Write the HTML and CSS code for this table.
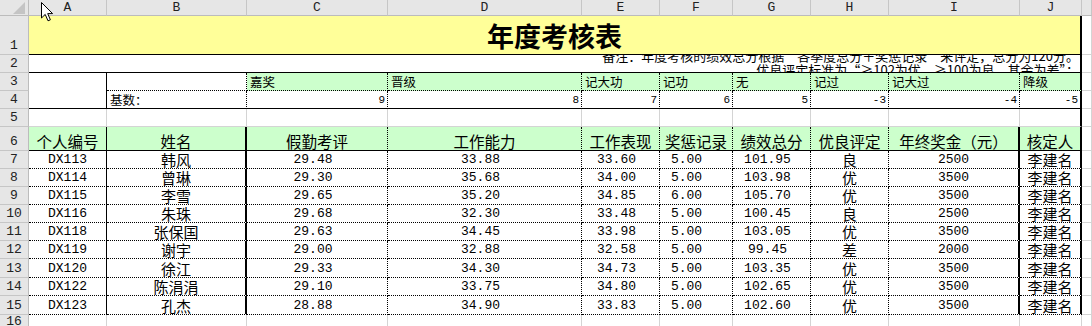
FILE: index.html
```html
<!DOCTYPE html>
<html lang="zh-CN">
<head>
<meta charset="utf-8">
<title>年度考核表</title>
<link rel="stylesheet" href="styles.css">
</head>
<body>
<div class="sheet">
  <!-- column headers -->
  <div class="corner"><span class="tri"></span></div>
  <div class="ch">A</div><div class="ch">B</div><div class="ch">C</div><div class="ch">D</div><div class="ch">E</div>
  <div class="ch">F</div><div class="ch">G</div><div class="ch">H</div><div class="ch">I</div><div class="ch">J</div><div class="ch"></div>

  <!-- row 1 -->
  <div class="rh">1</div>
  <div class="title">年度考核表</div>
  <div class="k"></div>

  <!-- row 2 -->
  <div class="rh">2</div>
  <div class="note"><div class="note-text">备注：年度考核的绩效总分根据“各季度总分＋奖惩记录”来评定，总分为120分。<br>优良评定标准为“≥102为优，≥100为良，其余为差”：</div></div>
  <div class="k"></div>

  <!-- row 3 -->
  <div class="rh">3</div>
  <div class="a34"></div>
  <div class="b3"></div>
  <div class="lv">嘉奖</div><div class="lv">晋级</div><div class="lv">记大功</div><div class="lv">记功</div>
  <div class="lv">无</div><div class="lv">记过</div><div class="lv">记大过</div><div class="lv last">降级</div>
  <div class="k"></div>

  <!-- row 4 -->
  <div class="rh">4</div>
  <div class="b4">基数：</div>
  <div class="bv">9</div><div class="bv">8</div><div class="bv">7</div><div class="bv">6</div>
  <div class="bv">5</div><div class="bv">-3</div><div class="bv">-4</div><div class="bv last">-5</div>
  <div class="k"></div>

  <!-- row 5 -->
  <div class="rh">5</div>
  <div></div><div></div><div></div><div></div><div></div><div></div><div></div><div></div><div></div><div class="j5"></div>
  <div class="k"></div>

  <!-- row 6 -->
  <div class="rh">6</div>
  <div class="hd ca">个人编号</div><div class="hd cb">姓名</div><div class="hd">假勤考评</div><div class="hd">工作能力</div>
  <div class="hd">工作表现</div><div class="hd">奖惩记录</div><div class="hd">绩效总分</div><div class="hd">优良评定</div>
  <div class="hd ci">年终奖金（元）</div><div class="hd cj">核定人</div>
  <div class="k"></div>

  <div class="rh">7</div>
  <div class="d ca n">DX113</div><div class="d cb">韩风</div><div class="d n sp">29.48</div><div class="d n sp">33.88</div><div class="d n sp">33.60</div><div class="d n sf">5.00</div><div class="d n sp">101.95</div><div class="d">良</div><div class="d n ci">2500</div><div class="d cj">李建名</div>
  <div class="k"></div>

  <div class="rh">8</div>
  <div class="d ca n">DX114</div><div class="d cb">曾琳</div><div class="d n sp">29.30</div><div class="d n sp">35.68</div><div class="d n sp">34.00</div><div class="d n sf">5.00</div><div class="d n sp">103.98</div><div class="d">优</div><div class="d n ci">3500</div><div class="d cj">李建名</div>
  <div class="k"></div>

  <div class="rh">9</div>
  <div class="d ca n">DX115</div><div class="d cb">李雪</div><div class="d n sp">29.65</div><div class="d n sp">35.20</div><div class="d n sp">34.85</div><div class="d n sf">6.00</div><div class="d n sp">105.70</div><div class="d">优</div><div class="d n ci">3500</div><div class="d cj">李建名</div>
  <div class="k"></div>

  <div class="rh">10</div>
  <div class="d ca n">DX116</div><div class="d cb">朱珠</div><div class="d n sp">29.68</div><div class="d n sp">32.30</div><div class="d n sp">33.48</div><div class="d n sf">5.00</div><div class="d n sp">100.45</div><div class="d">良</div><div class="d n ci">2500</div><div class="d cj">李建名</div>
  <div class="k"></div>

  <div class="rh">11</div>
  <div class="d ca n">DX118</div><div class="d cb">张保国</div><div class="d n sp">29.63</div><div class="d n sp">34.45</div><div class="d n sp">33.98</div><div class="d n sf">5.00</div><div class="d n sp">103.05</div><div class="d">优</div><div class="d n ci">3500</div><div class="d cj">李建名</div>
  <div class="k"></div>

  <div class="rh">12</div>
  <div class="d ca n">DX119</div><div class="d cb">谢宇</div><div class="d n sp">29.00</div><div class="d n sp">32.88</div><div class="d n sp">32.58</div><div class="d n sf">5.00</div><div class="d n sp">99.45</div><div class="d">差</div><div class="d n ci">2000</div><div class="d cj">李建名</div>
  <div class="k"></div>

  <div class="rh">13</div>
  <div class="d ca n">DX120</div><div class="d cb">徐江</div><div class="d n sp">29.33</div><div class="d n sp">34.30</div><div class="d n sp">34.73</div><div class="d n sf">5.00</div><div class="d n sp">103.35</div><div class="d">优</div><div class="d n ci">3500</div><div class="d cj">李建名</div>
  <div class="k"></div>

  <div class="rh">14</div>
  <div class="d ca n">DX122</div><div class="d cb">陈涓涓</div><div class="d n sp">29.10</div><div class="d n sp">33.75</div><div class="d n sp">34.80</div><div class="d n sf">5.00</div><div class="d n sp">102.65</div><div class="d">优</div><div class="d n ci">3500</div><div class="d cj">李建名</div>
  <div class="k"></div>

  <div class="rh">15</div>
  <div class="d ca n">DX123</div><div class="d cb">孔杰</div><div class="d n sp">28.88</div><div class="d n sp">34.90</div><div class="d n sp">33.83</div><div class="d n sf">5.00</div><div class="d n sp">102.60</div><div class="d">优</div><div class="d n ci">3500</div><div class="d cj">李建名</div>
  <div class="k"></div>

  <!-- row 16 -->
  <div class="rh">16</div>
  <div></div><div></div><div></div><div></div><div></div><div></div><div></div><div></div><div></div><div></div>
  <div class="k"></div>

  <svg class="cursor" width="14" height="22" viewBox="0 0 14 22" aria-hidden="true">
    <path d="M1.5 1.5 L1.5 17 L5.2 13.4 L8 19.8 L10.4 18.8 L7.7 12.6 L12.6 12.6 Z" fill="#fff" stroke="#000" stroke-width="1" stroke-linejoin="miter"/>
  </svg>
</div>
</body>
</html>
```

FILE: styles.css
```css
html, body {
  margin: 0;
  padding: 0;
  background: #fff;
}

.sheet {
  position: relative;
  display: grid;
  grid-template-columns: 29px 78px 140px 141px 194px 78px 73px 78px 78px 131px 62px 1fr;
  grid-template-rows: 16px 39px 18px 18px 18px 18px 24px 18px 18px 18px 18px 18px 18px 19px 18px 19px 1fr;
  width: 1092px;
  height: 326px;
  overflow: hidden;
  font-family: "Noto Sans CJK SC", sans-serif;
  color: #000;
}

.sheet > div {
  box-sizing: border-box;
  min-width: 0;
  display: flex;
  align-items: flex-end;
  overflow: hidden;
  white-space: nowrap;
  border-right: 1px solid #d4d4d4;
  border-bottom: 1px solid #d4d4d4;
}

/* headers */
.corner {
  background: #e6e6e6;
  position: relative;
  border-right-color: #bcbcbc !important;
  border-bottom-color: #bcbcbc !important;
}
.tri {
  position: absolute;
  left: 13px;
  top: 2px;
  width: 12px;
  height: 12px;
  background: #c4c4c4;
  clip-path: polygon(100% 0, 100% 100%, 0 100%);
}
.ch {
  background: #e6e6e6;
  border-right-color: #c6c6c6 !important;
  border-bottom-color: #bcbcbc !important;
  justify-content: center;
  align-items: center !important;
  font: 13px/14px "Liberation Mono", monospace;
  color: #222;
}
.rh {
  background: #e6e6e6;
  border-right-color: #bcbcbc !important;
  border-bottom-color: #c6c6c6 !important;
  justify-content: center;
  font: 13px/14px "Liberation Mono", monospace;
  color: #222;
  padding-bottom: 1px;
}

/* row 1 */
.title {
  grid-column: span 10;
  background: #ffff99;
  justify-content: center;
  align-items: center !important;
  font: bold 27px/1 "Noto Sans CJK SC", sans-serif;
  border-bottom: 1px solid #000 !important;
  border-right: 2px solid #000 !important;
}

/* row 2 */
.note {
  grid-column: span 10;
  justify-content: flex-end;
  align-items: center !important;
  border-bottom: 1px solid #000 !important;
  border-right: 2px solid #000 !important;
}
.note-text {
  font-size: 13px;
  line-height: 14px;
  text-align: right;
  padding-right: 1px;
  margin-top: -2px;
}

/* rows 3-4 */
.a34 {
  grid-row: span 2;
  border-right: 1px solid #000 !important;
  border-bottom: 1px solid #000 !important;
}
.b3 {
  border-right: 1px dotted #000 !important;
  border-bottom: 1px dotted #000 !important;
}
.lv {
  background: #ccffcc;
  font-size: 12.5px;
  line-height: 15px;
  padding-left: 3px;
  padding-bottom: 1px;
  border-right: 1px dotted #000 !important;
  border-bottom: 1px dotted #000 !important;
}
.b4 {
  font-size: 12.5px;
  line-height: 15px;
  padding-left: 3px;
  padding-bottom: 1px;
  border-right: 1px dotted #000 !important;
  border-bottom: 1px solid #000 !important;
}
.bv {
  justify-content: flex-end;
  font: 11px/12px "Liberation Mono", monospace;
  padding-right: 2px;
  padding-bottom: 2px;
  border-right: 1px dotted #000 !important;
  border-bottom: 1px solid #000 !important;
}
.lv.last, .bv.last, .j5 {
  border-right: 2px solid #000 !important;
}

/* rows 6-15 */
.sheet > .hd,
.sheet > .d,
.sheet > .rh,
.sheet > .lv,
.sheet > .b4 {
  overflow: visible;
}
.hd {
  background: #ccffcc;
  justify-content: center;
  font-size: 15.5px;
  line-height: 17px;
  padding-bottom: 0;
  border-right: 1px dotted #000 !important;
  border-bottom: 1px solid #000 !important;
}
.d {
  justify-content: center;
  font-size: 15px;
  line-height: 17px;
  padding-bottom: 0;
  border-right: 1px dotted #000 !important;
  border-bottom: 1px dotted #000 !important;
}
.d.n {
  font-family: "Liberation Mono", monospace;
  font-size: 13px;
  line-height: 14px;
  padding-bottom: 1px;
}
.d.sp { padding-right: 8px; }
.d.sf { padding-right: 19px; }

.ca { border-right: 1px solid #000 !important; }
.cb, .ci, .cj { border-right: 2px solid #000 !important; }

.cursor {
  position: absolute;
  left: 40px;
  top: 1px;
}
```
